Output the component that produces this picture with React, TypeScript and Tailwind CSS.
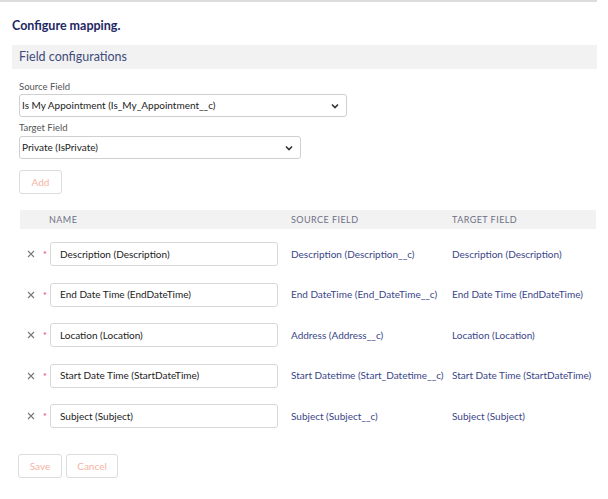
const rows = [
  { name: "Description (Description)", source: "Description (Description__c)", target: "Description (Description)" },
  { name: "End Date Time (EndDateTime)", source: "End DateTime (End_DateTime__c)", target: "End Date Time (EndDateTime)" },
  { name: "Location (Location)", source: "Address (Address__c)", target: "Location (Location)" },
  { name: "Start Date Time (StartDateTime)", source: "Start Datetime (Start_Datetime__c)", target: "Start Date Time (StartDateTime)" },
  { name: "Subject (Subject)", source: "Subject (Subject__c)", target: "Subject (Subject)" },
];

function Chevron() {
  return (
    <svg width="10" height="10" viewBox="0 0 10 10" className="shrink-0">
      <path d="M2 3.5 L5 6.5 L8 3.5" fill="none" stroke="#333" strokeWidth="1.6" />
    </svg>
  );
}

function Select({ value, width }: { value: string; width: string }) {
  return (
    <div
      className={`flex h-[23px] items-center justify-between whitespace-nowrap rounded-[3px] border border-[#cfcfcf] bg-white pl-[2px] pr-[6px] text-[10px] text-[#222] ${width}`}
    >
      <span>{value}</span>
      <Chevron />
    </div>
  );
}

export default function App() {
  return (
    <div className="h-[499px] w-[608px] bg-white font-['Lato',sans-serif]">
      <div className="ml-0 mr-[11px] h-[2px] bg-[#dcdcdc]" />
      <h1 className="ml-[12px] mt-[15px] text-[12.5px] font-bold leading-[17px] text-[#1d2763]">Configure mapping.</h1>
      <div className="ml-[12px] mr-[11px] mt-[11px] flex h-[24px] items-center bg-[#f2f2f2] pl-[7px] text-[12.5px] text-[#3f4c7a]">
        Field configurations
      </div>

      <div className="ml-[19px] mt-[11px]">
        <div className="text-[9.5px] leading-[13px] text-[#555]">Source Field</div>
        <div className="mt-[1px]">
          <Select value="Is My Appointment (Is_My_Appointment__c)" width="w-[328px]" />
        </div>
        <div className="mt-[4px] text-[9.5px] leading-[13px] text-[#555]">Target Field</div>
        <div className="mt-[2px]">
          <Select value="Private (IsPrivate)" width="w-[282px]" />
        </div>
        <button className="mt-[11px] flex h-[24px] w-[43px] items-center justify-center rounded-[3px] border border-[#dcdcdc] bg-white text-[10px] text-[#f4b4a4]">
          Add
        </button>
      </div>

      <div className="ml-[20px] mr-[12px] mt-[16px]">
        <div className="flex h-[19px] items-center whitespace-nowrap bg-[#f2f2f2] text-[9px] tracking-[0.05em] text-[#6e7085]">
          <div className="w-[271px] pl-[29px]">NAME</div>
          <div className="w-[161px]">SOURCE FIELD</div>
          <div>TARGET FIELD</div>
        </div>
        <div className="mt-[13px] flex flex-col gap-[16.5px]">
          {rows.map((r) => (
            <div key={r.name} className="flex h-[24px] items-center whitespace-nowrap text-[10px] text-[#3a4588]">
              <div className="flex w-[30px] items-center">
                <svg width="8" height="8" viewBox="0 0 8 8" className="ml-[7px]">
                  <path d="M1 1 L7 7 M7 1 L1 7" stroke="#777" strokeWidth="1.1" />
                </svg>
                <span className="ml-[8px] self-start pt-[1px] text-[9px] leading-[9px] text-[#e0405a]">*</span>
              </div>
              <div className="flex h-[24px] w-[228px] items-center rounded-[3px] border border-[#d8d8d8] bg-white pl-[9px] text-[10px] text-[#222]">
                {r.name}
              </div>
              <div className="ml-[13px] w-[161px]">{r.source}</div>
              <div>{r.target}</div>
            </div>
          ))}
        </div>
      </div>

      <div className="ml-[18px] mt-[26px] flex gap-[4px]">
        <button className="flex h-[24px] w-[44px] items-center justify-center rounded-[3px] border border-[#dcdcdc] bg-white text-[10px] text-[#f4b4a4]">
          Save
        </button>
        <button className="flex h-[24px] w-[52px] items-center justify-center rounded-[3px] border border-[#dcdcdc] bg-white text-[10px] text-[#f4b4a4]">
          Cancel
        </button>
      </div>
    </div>
  );
}
